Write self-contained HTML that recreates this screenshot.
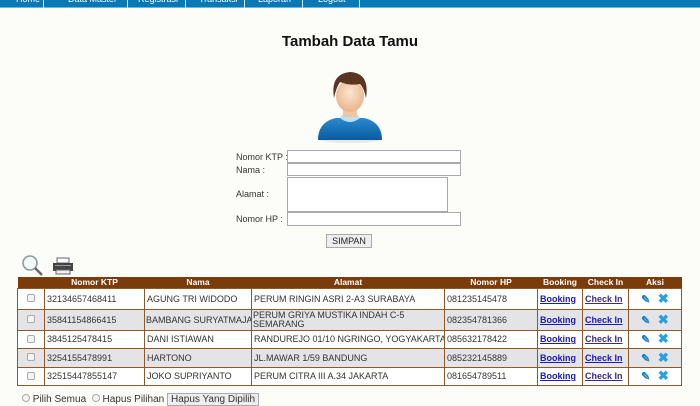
<!DOCTYPE html>
<html><head><meta charset="utf-8"><style>
*{margin:0;padding:0;box-sizing:border-box}
body{width:700px;height:400px;overflow:hidden;background:#fcfcf8;font-family:"Liberation Sans",Arial,sans-serif;font-size:9px;color:#333;position:relative}
.nav{position:absolute;left:0;top:0;width:700px;height:8px;background:#0a78b3;border-bottom:1px solid #6cb6e0}
.nav span{position:absolute;top:-6px;color:#fff;font-size:9px}
.nav i{position:absolute;top:0;width:1px;height:8px;background:#cfe6f3}
h1{position:absolute;top:33px;left:0;width:700px;text-align:center;font-size:15px;font-weight:bold;color:#111}
.lbl{position:absolute;left:236px;font-size:9px;color:#333}
.inp{position:absolute;left:287px;background:#fff;border:1px solid #aaa}
.btn{position:absolute;left:326px;top:234px;width:46px;height:14px;border:1px solid #aaa;background:#eee;font-size:9px;text-align:center;line-height:12px;color:#222}
table{position:absolute;left:17px;top:277px;width:664px;border-collapse:collapse;font-size:9px;table-layout:fixed}
th{background:#7a3c0b;color:#fff;font-weight:bold;height:11px;padding:0;font-size:8.5px;line-height:11px}
td{border:1px solid #8a5a2a;padding:0 2px;color:#333;line-height:9px;white-space:nowrap;overflow:hidden}
tr.a td{background:#fff}tr.b td{background:#e4e3e6}
td.c{text-align:center}
a{color:#1a1ab0;text-decoration:underline;font-weight:bold}
a.k{color:#3a2a8a}
.cb{display:inline-block;width:8px;height:8px;border:1px solid #aaa;border-radius:2px;background:#f4f4f4}
.pen{color:#1a7fc0;font-size:11px;font-weight:bold}
.x{color:#2aa0e0;font-size:13px;font-weight:bold}
</style></head><body>
<div class="nav">
<span style="left:16px">Home</span><i style="left:43px"></i>
<span style="left:68px">Data Master</span><i style="left:127px"></i>
<span style="left:138px">Registrasi</span><i style="left:185px"></i>
<span style="left:199px">Transaksi</span><i style="left:244px"></i>
<span style="left:258px">Laporan</span><i style="left:302px"></i>
<span style="left:318px">Logout</span><i style="left:359px"></i>
</div>
<h1>Tambah Data Tamu</h1>
<svg style="position:absolute;left:310px;top:60px" width="80" height="85" viewBox="0 0 80 85">
<defs><radialGradient id="f" cx="0.5" cy="0.4" r="0.6"><stop offset="0" stop-color="#fbe5d0"/><stop offset="1" stop-color="#e8b48c"/></radialGradient>
<linearGradient id="s" x1="0" y1="0" x2="0" y2="1"><stop offset="0" stop-color="#2a8ad0"/><stop offset="1" stop-color="#0a5a9e"/></linearGradient></defs>
<ellipse cx="40" cy="80" rx="30" ry="3" fill="#e8e8e4"/>
<path d="M8 80 Q8 62 26 58 L54 58 Q72 62 72 80 Z" fill="url(#s)"/>
<path d="M30 58 Q40 66 50 58 L48 55 L32 55 Z" fill="#bfe0f0"/>
<rect x="33" y="44" width="14" height="13" fill="#eec7a6"/>
<ellipse cx="40" cy="36" rx="14" ry="16" fill="url(#f)"/>
<path d="M24 38 Q20 14 40 12 Q60 13 56 38 Q54 28 50 24 Q40 26 30 22 Q26 28 24 38 Z" fill="#5a3622"/>
</svg>
<div class="lbl" style="top:152px">Nomor KTP :</div>
<div class="lbl" style="top:165px">Nama :</div>
<div class="lbl" style="top:189px">Alamat :</div>
<div class="lbl" style="top:214px">Nomor HP :</div>
<div class="inp" style="top:150px;width:174px;height:13px"></div>
<div class="inp" style="top:163px;width:174px;height:13px"></div>
<div class="inp" style="top:177px;width:161px;height:35px"></div>
<div class="inp" style="top:212px;width:174px;height:14px"></div>
<div class="btn">SIMPAN</div>
<svg style="position:absolute;left:21px;top:254px" width="24" height="22" viewBox="0 0 24 22"><circle cx="9" cy="9" r="7" fill="#f4f8fa" stroke="#8a9aa4" stroke-width="1.6"/><path d="M14 14 L21 21" stroke="#667" stroke-width="2.5"/></svg>
<svg style="position:absolute;left:52px;top:257px" width="22" height="18" viewBox="0 0 22 18"><rect x="5" y="1" width="12" height="5" fill="#fff" stroke="#666"/><rect x="1" y="6" width="20" height="8" fill="#444"/><rect x="3" y="8" width="16" height="1" fill="#999"/><rect x="4" y="13" width="14" height="4" fill="#eee" stroke="#666"/></svg>
<table>
<colgroup><col style="width:27px"><col style="width:100px"><col style="width:107px"><col style="width:193px"><col style="width:93px"><col style="width:45px"><col style="width:46px"><col style="width:53px"></colgroup>
<tr><th></th><th>Nomor KTP</th><th>Nama</th><th>Alamat</th><th>Nomor HP</th><th>Booking</th><th>Check In</th><th>Aksi</th></tr>
<tr class="a" style="height:21px"><td class="c"><span class="cb"></span></td><td>32134657468411</td><td>AGUNG TRI WIDODO</td><td>PERUM RINGIN ASRI 2-A3 SURABAYA</td><td>081235145478</td><td><a>Booking</a></td><td><a class="k">Check In</a></td><td class="c"><span class="pen">✎</span>&nbsp;&nbsp;&nbsp;<span class="x">✖</span></td></tr>
<tr class="b" style="height:21px"><td class="c"><span class="cb"></span></td><td>35841154866415</td><td style="padding:0 1px">BAMBANG SURYATMAJA</td><td style="white-space:normal;padding:0 1px">PERUM GRIYA MUSTIKA INDAH C-5 SEMARANG</td><td>082354781366</td><td><a>Booking</a></td><td><a>Check In</a></td><td class="c"><span class="pen">✎</span>&nbsp;&nbsp;&nbsp;<span class="x">✖</span></td></tr>
<tr class="a" style="height:18px"><td class="c"><span class="cb"></span></td><td>3845125478415</td><td>DANI ISTIAWAN</td><td>RANDUREJO 01/10 NGRINGO, YOGYAKARTA</td><td>085632178422</td><td><a>Booking</a></td><td><a class="k">Check In</a></td><td class="c"><span class="pen">✎</span>&nbsp;&nbsp;&nbsp;<span class="x">✖</span></td></tr>
<tr class="b" style="height:19px"><td class="c"><span class="cb"></span></td><td>3254155478991</td><td>HARTONO</td><td>JL.MAWAR 1/59 BANDUNG</td><td>085232145889</td><td><a>Booking</a></td><td><a>Check In</a></td><td class="c"><span class="pen">✎</span>&nbsp;&nbsp;&nbsp;<span class="x">✖</span></td></tr>
<tr class="a" style="height:18px"><td class="c"><span class="cb"></span></td><td>32515447855147</td><td>JOKO SUPRIYANTO</td><td>PERUM CITRA III A.34 JAKARTA</td><td>081654789511</td><td><a>Booking</a></td><td><a class="k">Check In</a></td><td class="c"><span class="pen">✎</span>&nbsp;&nbsp;&nbsp;<span class="x">✖</span></td></tr>
</table>
<div style="position:absolute;left:22px;top:394px;font-size:10px;color:#333;white-space:nowrap">
<span class="cb" style="border-radius:50%"></span> Pilih Semua &nbsp;<span class="cb" style="border-radius:50%"></span> Hapus Pilihan <span style="border:1px solid #aaa;background:#eee;padding:0 3px">Hapus Yang Dipilih</span></div>
</body></html>
